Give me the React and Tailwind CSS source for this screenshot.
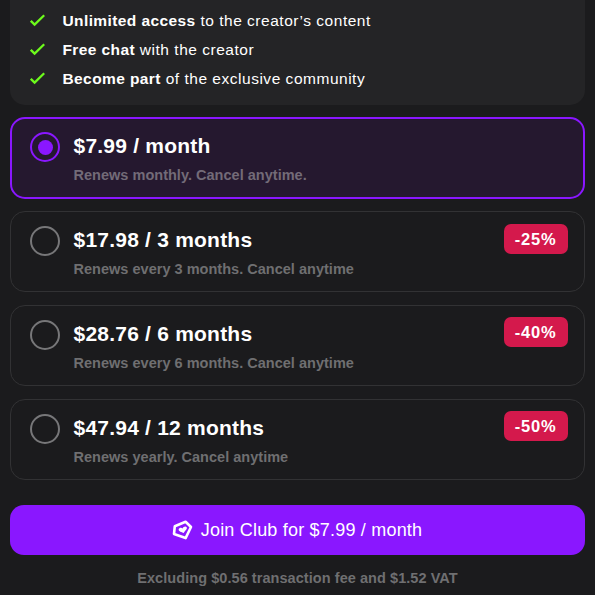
const features = [
  { bold: 'Unlimited access', rest: 'to the creator’s content' },
  { bold: 'Free chat', rest: 'with the creator' },
  { bold: 'Become part', rest: 'of the exclusive community' },
]

const plans = [
  { id: 1, title: '$7.99 / month', note: 'Renews monthly. Cancel anytime.', selected: true },
  { id: 3, title: '$17.98 / 3 months', note: 'Renews every 3 months. Cancel anytime', discount: '-25%', badgeOffset: '-mt-0.5' },
  { id: 6, title: '$28.76 / 6 months', note: 'Renews every 6 months. Cancel anytime', discount: '-40%', badgeOffset: '-mt-[3px]' },
  { id: 12, title: '$47.94 / 12 months', note: 'Renews yearly. Cancel anytime', discount: '-50%', badgeOffset: '-mt-[3px]' },
]

export default function App() {
  return (
    <div className="h-[595px] w-[595px] overflow-hidden bg-[#1b1b1d] px-2.5 font-['Liberation_Sans',Arial,sans-serif] text-white">
      <ul className="h-[105px] rounded-b-[15px] bg-[#242426] pt-1.5 pl-5">
        {features.map((f) => (
          <li key={f.bold} className="flex h-[29px] items-center">
            <Check />
            <span className="ml-[17.5px] text-[15.5px] leading-[29px] tracking-[0.52px] whitespace-nowrap">
              <b className="tracking-[0.4px]">{f.bold}</b> {f.rest}
            </span>
          </li>
        ))}
      </ul>

      <div className="mt-3 flex flex-col gap-[13px]">
        {plans.map((p) => <Plan key={p.id} {...p} />)}
      </div>

      <button className="mt-[25px] flex h-[50px] w-full items-center justify-center gap-[7px] rounded-[14px] bg-[#8a17ff] text-lg">
        <ClubIcon />
        <span className="tracking-[0.2px] whitespace-nowrap">Join Club for $7.99 / month</span>
      </button>
      <p className="mt-[13px] text-center text-[14.5px] leading-5 font-bold tracking-[0.06px] text-[#6f6f71]">
        Excluding $0.56 transaction fee and $1.52 VAT
      </p>
    </div>
  )
}

function Plan({ title, note, discount, selected, badgeOffset }) {
  return (
    <div className={`flex items-start rounded-[15px] ${selected ? '-mb-px h-[82px] border-2 border-[#8a17ff] bg-[#25182f] pt-[13px] pr-[15px] pl-[18px]' : 'h-[81px] border border-[#323234] pt-[14px] pr-4 pl-[19px]'}`}>
      <span className={`flex size-[30px] shrink-0 items-center justify-center rounded-full border-2 ${selected ? 'border-[#8a17ff]' : 'border-[#777779]'}`}>
        {selected && <span className="size-[15px] rounded-full bg-[#8a17ff]" />}
      </span>
      <div className="-mt-px ml-[13.5px] grow whitespace-nowrap">
        <div className="text-[21px] leading-[30px] font-bold tracking-[0.22px]">{title}</div>
        <div className={`mt-0.5 text-[14.5px] leading-6 font-bold tracking-[0.02px] ${selected ? 'text-[#736b78]' : 'text-[#6f6f71]'}`}>{note}</div>
      </div>
      {discount && (
        <span className={`flex h-[30px] w-16 items-center justify-center rounded-[7px] bg-[#d4194c] pt-px pr-px text-[16.5px] leading-[29px] font-bold tracking-[0.8px] ${badgeOffset}`}>
          {discount}
        </span>
      )}
    </div>
  )
}

function Check() {
  return (
    <svg width="15" height="13" viewBox="0 0 15 13" className="shrink-0" fill="none" stroke="#6dfb1c" strokeWidth="2.3">
      <path d="M0.8 6.8 4.6 10.6 14.2 1.2" />
    </svg>
  )
}

function ClubIcon() {
  return (
    <svg width="21" height="20" viewBox="0 0 21 20" className="mr-px -ml-px shrink-0">
      <path d="M13.6 1.8 19 7 13.6 18.1 2 14 2.8 6.2Z" fill="none" stroke="white" strokeWidth="2.6" strokeLinejoin="round" />
      <path d="M10.6 8.4C11.4 6.5 13.6 5.8 14.7 7.2 15.6 8.8 13.2 10.6 11.6 13 9.7 12 6.6 11.5 6.6 9.5 7 7.5 9.6 7.2 10.6 8.4Z" fill="white" />
    </svg>
  )
}
